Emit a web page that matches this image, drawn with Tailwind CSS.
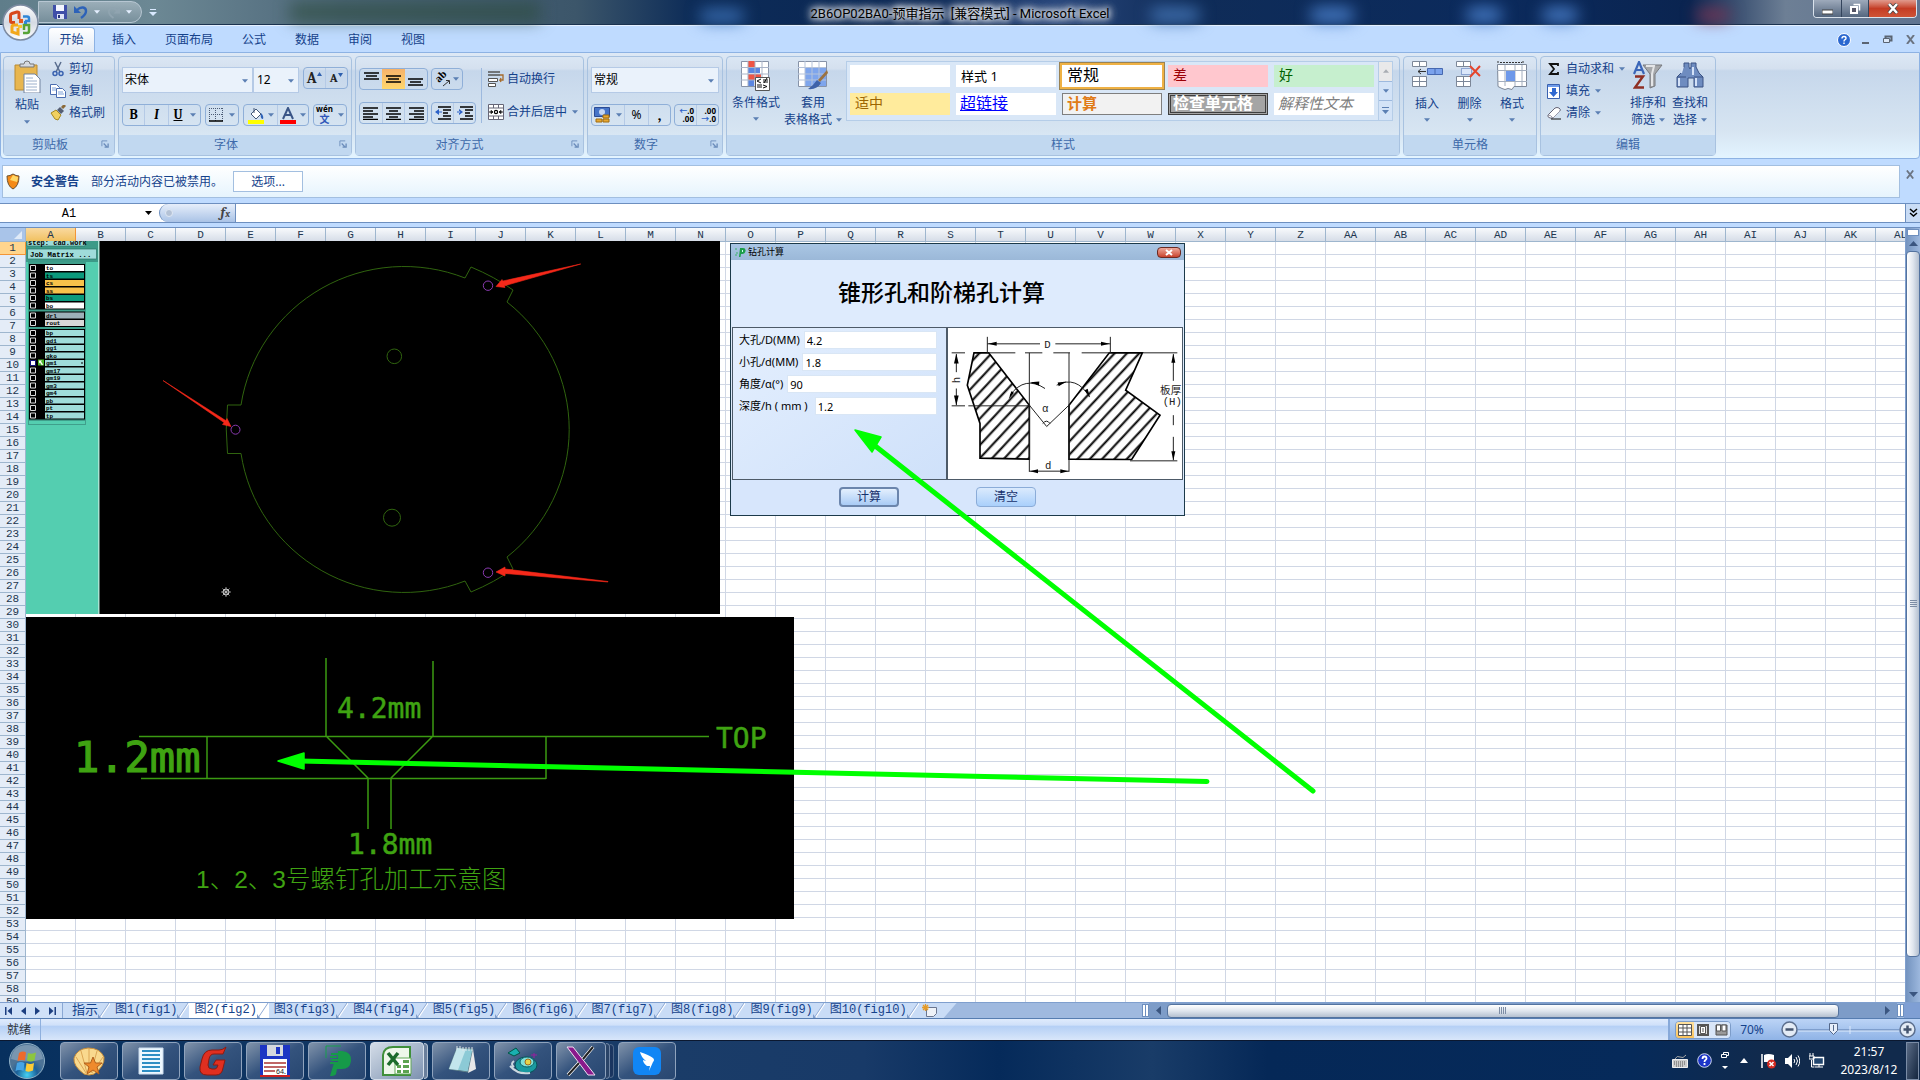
<!DOCTYPE html>
<html lang="zh-CN">
<head>
    <meta charset="utf-8">
    <title>2B6OP02BA0-预审指示 [兼容模式] - Microsoft Excel</title>
    <script src="https://cdn.jsdelivr.net/npm/@tailwindcss/browser@4"></script>
    <style>
        body {
            font-family: 'Noto Sans', 'Noto Sans CJK SC', sans-serif
        }

        .mono {
            font-family: 'Liberation Mono', 'Noto Sans CJK SC', monospace
        }

        .glow {
            font-family: Roboto, 'Noto Sans CJK SC', sans-serif;
            text-shadow: 0 0 5px #fff, 0 0 8px #fff, 0 0 10px #fff, 0 0 14px #fff
        }
    </style>
</head>
<body class="h-screen overflow-hidden flex flex-col bg-[#bfdbff] text-[12px] leading-[16px] text-[#15428b]">
<svg class="hidden">
    <symbol id="dn" viewBox="0 0 7 4"><path d="M0 0h7L3.500 4z" fill="#5b7fb3"/></symbol>
    <symbol id="launch" viewBox="0 0 9 9"><path d="M1 7V1h6" fill="none" stroke="#6b8cba"/><path d="M3 4l4 4M8 4v4H4" fill="none" stroke="#6b8cba" stroke-width="1.500"/></symbol>
</svg>

<!-- title bar -->
<header class="relative shrink-0 h-[25px] flex items-center bg-[linear-gradient(90deg,#5f7d8a_0%,#6c8894_8%,#4c6679_18%,#3c566a_30%,#0d2c58_36%,#0a2653_48%,#27457a_55%,#0f2c58_62%,#0b2a5c_78%,#0a2450_88%,#6d7f95_93%,#5f7390_100%)] border-b border-[#1b3350]">
    <div class="absolute left-[290px] top-[2px] w-[250px] h-[20px] bg-[#2c4b3a]/60 blur-sm"></div>
    <div class="absolute left-[700px] top-[10px] w-[44px] h-[12px] rounded-full bg-[#3e74bb] blur-sm"></div>
    <div class="absolute left-[1150px] top-[8px] w-[50px] h-[14px] rounded-full bg-[#4374b4] blur-sm"></div>
    <div class="absolute left-[1310px] top-[8px] w-[44px] h-[14px] rounded-full bg-[#4a80cc] blur-sm"></div>
    <div class="absolute left-[1466px] top-[8px] w-[36px] h-[14px] rounded-full bg-[#4a80cc] blur-sm"></div>
    <div class="absolute left-[1542px] top-[8px] w-[36px] h-[14px] rounded-full bg-[#4a80cc] blur-sm"></div>
    <div class="absolute left-[1696px] top-[10px] w-[34px] h-[10px] rounded-full bg-[#8a3350] blur-sm"></div>
    <div class="relative ml-[38px] w-[104px] h-[22px] pl-[14px] flex items-center gap-[7px] rounded-r-full border border-[#b7c6d2] bg-linear-to-b from-[#a7b8c2]/80 to-[#7b929e]/80">
        <button aria-label="保存">
            <svg class="w-[14px] h-[14px]" viewBox="0 0 14 14"><path d="M0 0h14v14H2l-2-2z" fill="#3f4fa8"/><path d="M3 0h8v6H3z" fill="#f4f6ff"/><path d="M4 9h7v5H4z" fill="#dfe4f8"/><path d="M5 10h2v3H5z" fill="#26347c"/></svg>
        </button>
        <button aria-label="撤消" class="flex items-center gap-[6px]">
            <svg class="w-[14px] h-[14px]" viewBox="0 0 14 14"><path d="M3 5c4-4 9-3 9 1 0 3-2 5-5 7" fill="none" stroke="#2d62b8" stroke-width="2.400"/><path d="M0 1v7h7z" fill="#2d62b8"/></svg>
            <svg class="w-[6px] h-[4px]" viewBox="0 0 7 4"><path d="M0 0h7L3.500 4z" fill="#e4efff"/></svg>
        </button>
        <button aria-label="恢复" class="flex items-center gap-[6px]">
            <svg class="w-[13px] h-[13px]" viewBox="0 0 14 14"><path d="M11 5C7 1 2 2 2 6c0 3 2 5 5 7" fill="none" stroke="#90a4b0" stroke-width="2"/><path d="M14 1v7H7z" fill="#90a4b0"/></svg>
            <svg class="w-[6px] h-[4px]" viewBox="0 0 7 4"><path d="M0 0h7L3.500 4z" fill="#e4efff"/></svg>
        </button>
    </div>
    <button aria-label="自定义快速访问工具栏" class="relative ml-[7px]">
        <svg class="w-[8px] h-[7px]" viewBox="0 0 8 7"><path d="M1 0h6v1H1zM0 3h8L4 7z" fill="#d9e9ff"/></svg>
    </button>
    <h1 class="absolute left-1/2 top-[6px] -translate-x-1/2 glow text-[13px] text-black whitespace-pre">2B6OP02BA0-预审指示  [兼容模式] - Microsoft Excel</h1>
    <div class="absolute right-[3px] top-0 h-[18px] flex rounded-b border border-t-0 border-[#d9e2ec] overflow-hidden">
        <button aria-label="最小化" class="w-[28px] flex items-center justify-center bg-linear-to-b from-[#9eaabb] to-[#55677f] border-r border-[#33445c]">
            <svg class="w-[11px] h-[12px]" viewBox="0 0 11 12"><path d="M0 7h11v4H0z" fill="#fff" stroke="#444"/></svg>
        </button>
        <button aria-label="还原" class="w-[27px] flex items-center justify-center bg-linear-to-b from-[#9eaabb] to-[#55677f] border-r border-[#33445c]">
            <svg class="w-[12px] h-[12px]" viewBox="0 0 12 12"><path d="M4.500 1.500h6v6" fill="none" stroke="#fff" stroke-width="1.500"/><path d="M2 4h6v6H2z" fill="#556" stroke="#fff" stroke-width="2"/></svg>
        </button>
        <button aria-label="关闭" class="w-[47px] flex items-center justify-center bg-linear-to-b from-[#e09a8d] via-[#c43c24] to-[#cf5336]">
            <svg class="w-[12px] h-[11px]" viewBox="0 0 12 11"><path d="M2 1l8 9M10 1L2 10" stroke="#444" stroke-width="4"/><path d="M2 1l8 9M10 1L2 10" stroke="#fff" stroke-width="2.500"/></svg>
        </button>
    </div>
    <button aria-label="Office" class="absolute z-10 left-[2px] top-[4px]">
        <svg class="w-[37px] h-[37px]" viewBox="0 0 37 37">
            <defs><linearGradient id="orb" x2="0" y2="1"><stop stop-color="#fff"/><stop offset=".5" stop-color="#d5dae3"/><stop offset="1" stop-color="#fff"/></linearGradient></defs>
            <circle cx="18.500" cy="18.500" r="17.500" fill="url(#orb)" stroke="#7d8ba2" stroke-width="1.500"/>
            <g fill="none" stroke-width="3">
                <path d="M17 15V9.500q0-2-2-1.500l-5 1.500q-1.500.5-1.500 2V17q0 1.500 1.500 1.500h3" stroke="#d8481c"/>
                <path d="M21 12.500h4q2 0 2 2V17h-4" stroke="#2e86d8" stroke-width="2.500"/>
                <path d="M16 21h-4q-2 0-2 2v5l6 2V24" stroke="#f3a81c"/>
                <path d="M21 29h4q2 0 2-2v-6h-5v5" stroke="#57a336" stroke-width="2.500"/>
            </g>
            <path d="M17 15h4v4h-4z" fill="#e85b1e"/><path d="M22 17h3v3h-3z" fill="#2e86d8"/><path d="M16 21h4v3h-4z" fill="#f7c631"/>
        </svg>
    </button>
</header>

<!-- ribbon tabs -->
<nav class="shrink-0 h-[27px] pl-[48px] pr-[4px] flex items-end border-t border-[#e4f0ff]">
    <button class="w-[47px] h-[25px] rounded-t border border-b-0 border-[#8db2e3] bg-linear-to-b from-white to-[#e1eaf6]">开始</button>
    <button class="w-[58px] h-[25px]">插入</button>
    <button class="w-[72px] h-[25px]">页面布局</button>
    <button class="w-[58px] h-[25px]">公式</button>
    <button class="w-[48px] h-[25px]">数据</button>
    <button class="w-[58px] h-[25px]">审阅</button>
    <button class="w-[48px] h-[25px]">视图</button>
    <div class="ml-auto h-[25px] flex items-center gap-[11px]">
        <button aria-label="帮助"><svg class="w-[14px] h-[14px]" viewBox="0 0 14 14"><circle cx="7" cy="7" r="6.500" fill="#2a67d0" stroke="#fff"/><path d="M5 5.500q0-2 2-2t2 1.700q0 1-1 1.500T7 8.500M7 9.500v1.500" fill="none" stroke="#fff" stroke-width="1.400"/></svg></button>
        <button aria-label="最小化窗口"><svg class="w-[8px] h-[10px]" viewBox="0 0 8 10"><path d="M0 7h7v2H0z" fill="#5a6472"/></svg></button>
        <button aria-label="还原窗口" class="ml-[2px]"><svg class="w-[10px] h-[9px]" viewBox="0 0 10 9"><path d="M2.500 4V1.500h6v4H7" fill="none" stroke="#5a6472" stroke-width="2"/><path d="M.5 3.500h6v4h-6z" fill="#dce8f8" stroke="#5a6472"/></svg></button>
        <button aria-label="关闭窗口" class="ml-[2px]"><svg class="w-[10px] h-[9px]" viewBox="0 0 10 9"><path d="M1 0l7 9M8 0L1 9" stroke="#6b7482" stroke-width="2"/></svg></button>
    </div>
</nav>

<!-- ribbon -->
<section class="shrink-0 h-[107px] pl-[2px] pt-[3px] pb-[2px] flex gap-[3px] border border-[#8db2e3] rounded-b bg-[linear-gradient(#dde8f5_0%,#d4e0ef_15%,#c6d7eb_17%,#d7e5f2_75%,#e3f4ff_100%)] whitespace-nowrap">
    <div class="w-[112px] flex flex-col border border-[#a8c2e0] rounded">
        <div class="flex-1 flex pt-[3px]">
            <button class="ml-[8px] w-[30px] flex flex-col items-center">
                <svg class="w-[28px] h-[33px] shrink-0" viewBox="0 0 28 33"><path d="M2 5h22v25H2z" fill="#e8b64f" stroke="#b98a33"/><path d="M7 7V4h4q0-3 3-3t3 3h4v3z" fill="#d5d9df" stroke="#777"/><path d="M11 14h11l5 5v14H11z" fill="#fff" stroke="#7384a0"/><path d="M13 18h7M13 21h11M13 24h11M13 27h11M13 30h11" stroke="#9cb0cc"/></svg>
                <span class="mt-[4px]">粘贴</span>
                <svg class="mt-[7px] w-[6px] h-[4px] shrink-0"><use href="#dn"/></svg>
            </button>
            <div class="ml-[8px] flex flex-col">
                <button class="h-[22px] flex items-center gap-[3px] -mt-[2px]"><svg class="w-[16px] h-[16px]" viewBox="0 0 16 16"><path d="M5 1l5 10M11 1L6 11" stroke="#5a6e8e" stroke-width="1.500"/><circle cx="5" cy="12.500" r="2" fill="none" stroke="#3a62b0" stroke-width="1.500"/><circle cx="11" cy="12.500" r="2" fill="none" stroke="#3a62b0" stroke-width="1.500"/></svg>剪切</button>
                <button class="h-[22px] flex items-center gap-[3px]"><svg class="w-[16px] h-[14px]" viewBox="0 0 16 14"><path d="M.5.5h6l3 3v7h-9z" fill="#fff" stroke="#4b6db0"/><path d="M6.500 4.500h6l3 3v6h-9z" fill="#fff" stroke="#4b6db0"/><path d="M2 4h4M2 6h4M8 8h5M8 10h6" stroke="#7da0d8"/></svg>复制</button>
                <button class="h-[22px] flex items-center gap-[3px]"><svg class="w-[16px] h-[16px]" viewBox="0 0 16 16"><path d="M1 8l5-3 5 5-3 5-3-1z" fill="#f0d060" stroke="#a68820"/><path d="M7 5l3-3 4 4-3 3z" fill="#555f74"/><path d="M12 3l3-3" stroke="#8b6a3a" stroke-width="3"/></svg>格式刷</button>
            </div>
        </div>
        <div class="relative h-[20px] bg-[#c1d8f0] text-[#3e6aaa] text-center pr-[18px] pt-[2px]">剪贴板<button aria-label="剪贴板选项" class="absolute right-[5px] top-[5px]"><svg class="w-[8px] h-[8px]"><use href="#launch"/></svg></button></div>
    </div>

    <div class="w-[234px] flex flex-col border border-[#a8c2e0] rounded">
        <div class="flex-1 px-[3px] pt-[10px] flex flex-col">
            <div class="flex items-start">
                <div class="relative"><select aria-label="字体" class="appearance-none w-[131px] h-[26px] pl-[2px] border border-[#b5cae6] bg-[#eaf2fb] text-black"><option>宋体</option></select><svg class="absolute right-[5px] top-[12px] w-[6px] h-[4px] pointer-events-none"><use href="#dn"/></svg></div>
                <div class="relative"><select aria-label="字号" class="appearance-none w-[46px] h-[26px] pl-[3px] border border-[#b5cae6] bg-[#eaf2fb] text-black"><option>12</option></select><svg class="absolute right-[5px] top-[12px] w-[6px] h-[4px] pointer-events-none"><use href="#dn"/></svg></div>
                <div class="ml-[4px] h-[22px] w-[45px] flex rounded-sm border border-[#8fafd8] font-serif font-bold text-[#222]">
                    <button class="w-1/2 border-r border-[#b5cae6] text-[15px]" aria-label="增大字号">A<svg class="inline w-[5px] h-[4px] -mt-[10px]" viewBox="0 0 5 4"><path d="M0 4h5L2.500 0z" fill="#2d5fae"/></svg></button>
                    <button class="w-1/2 text-[12px]" aria-label="减小字号">A<svg class="inline w-[5px] h-[4px] -mt-[8px]" viewBox="0 0 5 4"><path d="M0 0h5L2.500 4z" fill="#2d5fae"/></svg></button>
                </div>
            </div>
            <div class="mt-[11px] flex gap-[4px] text-black">
                <div class="h-[22px] w-[79px] flex rounded-sm border border-[#8fafd8] font-serif text-[13px]">
                    <button class="w-[22px] border-r border-[#b5cae6] font-bold">B</button>
                    <button class="w-[24px] border-r border-[#b5cae6] font-bold italic">I</button>
                    <button class="flex-1 flex items-center justify-center gap-[7px]"><span class="font-bold underline">U</span><svg class="w-[6px] h-[4px]"><use href="#dn"/></svg></button>
                </div>
                <button aria-label="边框" class="h-[22px] w-[34px] flex items-center justify-center gap-[6px] rounded-sm border border-[#8fafd8]"><svg class="w-[14px] h-[14px]" viewBox="0 0 14 14"><path d="M.5 0v13M6.500 0v13M13.500 0v13M0 .5h14M0 6.500h14" stroke="#4a5a74" stroke-dasharray="1 1"/><path d="M0 13h14" stroke="#000" stroke-width="1.500"/></svg><svg class="w-[6px] h-[4px]"><use href="#dn"/></svg></button>
                <div class="h-[22px] w-[66px] flex rounded-sm border border-[#8fafd8]">
                    <button aria-label="填充颜色" class="w-[34px] flex items-center justify-center gap-[4px] border-r border-[#b5cae6]"><svg class="w-[16px] h-[17px]" viewBox="0 0 16 17"><path d="M3 7l5-5 5 5-5 5z" fill="#fff" stroke="#445878"/><path d="M6 1v5" stroke="#445878"/><path d="M13 6q3 3 2 6-3 0-2-6" fill="#2d62b8"/><path d="M0 13h16v4H0z" fill="#ff0"/></svg><svg class="w-[6px] h-[4px]"><use href="#dn"/></svg></button>
                    <button aria-label="字体颜色" class="flex-1 flex items-center justify-center gap-[4px]"><svg class="w-[16px] h-[17px]" viewBox="0 0 16 17"><path d="M3 12L8 1l5 11M5 8h6" fill="none" stroke="#3a5587" stroke-width="2"/><path d="M0 13h16v4H0z" fill="red"/></svg><svg class="w-[6px] h-[4px]"><use href="#dn"/></svg></button>
                </div>
                <button aria-label="拼音指南" class="h-[22px] w-[34px] flex items-center justify-center gap-[5px] rounded-sm border border-[#8fafd8]"><span class="flex flex-col text-[8px] leading-[8px] font-bold"><span>wén</span><span class="text-[10px] leading-[12px] text-[#2f55b8]">文</span></span><svg class="w-[6px] h-[4px]"><use href="#dn"/></svg></button>
            </div>
        </div>
        <div class="relative h-[20px] bg-[#c1d8f0] text-[#3e6aaa] text-center pr-[18px] pt-[2px]">字体<button aria-label="字体选项" class="absolute right-[4px] top-[5px]"><svg class="w-[8px] h-[8px]"><use href="#launch"/></svg></button></div>
    </div>

    <div class="w-[229px] flex flex-col border border-[#a8c2e0] rounded">
        <div class="flex-1 px-[3px] pt-[11px] flex">
            <div class="flex flex-col gap-[12px]">
                <div class="flex gap-[3px]">
                    <div class="h-[22px] w-[69px] flex rounded-sm border border-[#8fafd8]">
                        <button aria-label="顶端对齐" class="flex-1 flex justify-center pt-[3px]"><svg class="w-[15px] h-[9px]" viewBox="0 0 15 9"><path d="M0 1h15M2 4h11M0 7h15" stroke="#000" stroke-width="1.500"/></svg></button>
                        <button aria-label="垂直居中" class="flex-1 flex justify-center items-center bg-linear-to-b from-[#f6b26a] to-[#ffd76c]"><svg class="w-[15px] h-[9px]" viewBox="0 0 15 9"><path d="M0 1h15M2 4h11M0 7h15" stroke="#000" stroke-width="1.500"/></svg></button>
                        <button aria-label="底端对齐" class="flex-1 flex justify-center items-end pb-[2px]"><svg class="w-[15px] h-[9px]" viewBox="0 0 15 9"><path d="M0 1h15M2 4h11M0 7h15" stroke="#000" stroke-width="1.500"/></svg></button>
                    </div>
                    <button aria-label="方向" class="h-[22px] w-[32px] flex items-center justify-center gap-[2px] rounded-sm border border-[#8fafd8] text-black"><svg class="w-[16px] h-[16px]" viewBox="0 0 16 16"><text transform="translate(4 12) rotate(-45)" font-family="Liberation Serif" font-weight="bold" font-size="11">ab</text><path d="M8 15l6-5M11 9.500h3.500V13" fill="none" stroke="#333"/></svg><svg class="w-[6px] h-[4px]"><use href="#dn"/></svg></button>
                </div>
                <div class="flex gap-[3px]">
                    <div class="h-[22px] w-[69px] flex rounded-sm border border-[#8fafd8]">
                        <button aria-label="左对齐" class="flex-1 flex justify-center items-center border-r border-[#b5cae6]"><svg class="w-[15px] h-[13px]" viewBox="0 0 15 13"><path d="M0 1h15M0 4h10M0 7h15M0 10h10M0 12.500h15" stroke="#000" stroke-width="1.300"/></svg></button>
                        <button aria-label="居中" class="flex-1 flex justify-center items-center border-r border-[#b5cae6]"><svg class="w-[15px] h-[13px]" viewBox="0 0 15 13"><path d="M0 1h15M3 4h9M0 7h15M3 10h9M0 12.500h15" stroke="#000" stroke-width="1.300"/></svg></button>
                        <button aria-label="右对齐" class="flex-1 flex justify-center items-center"><svg class="w-[15px] h-[13px]" viewBox="0 0 15 13"><path d="M0 1h15M5 4h10M0 7h15M5 10h10M0 12.500h15" stroke="#000" stroke-width="1.300"/></svg></button>
                    </div>
                    <div class="h-[22px] w-[45px] flex rounded-sm border border-[#8fafd8]">
                        <button aria-label="减少缩进" class="flex-1 flex justify-center items-center border-r border-[#b5cae6]"><svg class="w-[16px] h-[14px]" viewBox="0 0 16 14"><path d="M3 1h13M8 4h8M8 7h5M8 10h8M3 13h13" stroke="#000" stroke-width="1.300"/><path d="M0 6l4-3v6zM4 5.500h3v1H4z" fill="#2d62c8"/></svg></button>
                        <button aria-label="增加缩进" class="flex-1 flex justify-center items-center"><svg class="w-[16px] h-[14px]" viewBox="0 0 16 14"><path d="M3 1h13M8 4h8M8 7h5M8 10h8M3 13h13" stroke="#000" stroke-width="1.300"/><path d="M6 6L2 3v6zM0 5.500h3v1H0z" fill="#2d62c8"/></svg></button>
                    </div>
                </div>
            </div>
            <div class="ml-[5px] h-[55px] border-l border-[#9db9de]"></div>
            <div class="ml-[6px] flex flex-col gap-[17px] pt-[3px]">
                <button class="flex items-center gap-[3px]"><svg class="w-[16px] h-[16px]" viewBox="0 0 16 16"><path d="M0 1h12M0 4h12" stroke="#555" stroke-width="1.500"/><path d="M.5 7.500h9v3h-9zM.5 12.500h7v3h-7z" fill="#fff" stroke="#555"/><path d="M12 4h3v5h-3l1-2M12 9l1 2" fill="none" stroke="#a66a2a" stroke-width="1.300"/></svg>自动换行</button>
                <button class="flex items-center gap-[3px]"><svg class="w-[16px] h-[16px]" viewBox="0 0 16 16"><path d="M.5.5h15v15H.5z" fill="#fff" stroke="#667"/><path d="M.5 4h15M.5 12h15M5.500 0v4M10.500 0v4M5.500 12v4M10.500 12v4" stroke="#667"/><path d="M1 8h4M11 8h4M5 8L3 6.500v3zM11 8l2-1.500v3z" stroke="#222"/><circle cx="8" cy="8" r="1.600" fill="none" stroke="#000" stroke-width="1.200"/></svg>合并后居中<svg class="ml-[2px] w-[6px] h-[4px]"><use href="#dn"/></svg></button>
            </div>
        </div>
        <div class="relative h-[20px] bg-[#c1d8f0] text-[#3e6aaa] text-center pr-[20px] pt-[2px]">对齐方式<button aria-label="对齐选项" class="absolute right-[4px] top-[5px]"><svg class="w-[8px] h-[8px]"><use href="#launch"/></svg></button></div>
    </div>

    <div class="w-[136px] flex flex-col border border-[#a8c2e0] rounded">
        <div class="flex-1 px-[3px] pt-[10px]">
            <div class="relative"><select aria-label="数字格式" class="appearance-none w-full h-[26px] pl-[2px] border border-[#b5cae6] bg-[#eaf2fb] text-black"><option>常规</option></select><svg class="absolute right-[5px] top-[12px] w-[6px] h-[4px] pointer-events-none"><use href="#dn"/></svg></div>
            <div class="mt-[11px] flex gap-[3px] text-black">
                <div class="h-[22px] flex-1 flex rounded-sm border border-[#8fafd8]">
                    <button aria-label="会计数字格式" class="w-[33px] flex items-center justify-center gap-[5px] border-r border-[#b5cae6]"><svg class="w-[17px] h-[16px]" viewBox="0 0 17 16"><path d="M.5.5h15v9H.5z" fill="#4674c8" stroke="#2b4b94"/><circle cx="8" cy="5" r="3" fill="#c3d6f4"/><path d="M9 8h6v3H9zM9 12h6v3H9zM2 12h6v3H2z" fill="#e7a832" stroke="#a06d10"/></svg><svg class="w-[6px] h-[4px]"><use href="#dn"/></svg></button>
                    <button class="w-[24px] border-r border-[#b5cae6]">%</button>
                    <button class="flex-1 font-serif font-bold text-[16px] leading-[10px]">,</button>
                </div>
                <div class="h-[22px] w-[45px] flex rounded-sm border border-[#8fafd8] text-[8px] leading-[8px] font-bold">
                    <button aria-label="增加小数位数" class="flex-1 text-right pr-[2px] border-r border-[#b5cae6]"><span class="text-[#2d62c8]">←</span>.0<br>.00</button>
                    <button aria-label="减少小数位数" class="flex-1 text-right pr-[2px]">.00<br><span class="text-[#2d62c8]">→</span>.0</button>
                </div>
            </div>
        </div>
        <div class="relative h-[20px] bg-[#c1d8f0] text-[#3e6aaa] text-center pr-[18px] pt-[2px]">数字<button aria-label="数字选项" class="absolute right-[4px] top-[5px]"><svg class="w-[8px] h-[8px]"><use href="#launch"/></svg></button></div>
    </div>

    <div class="w-[674px] flex flex-col border border-[#a8c2e0] rounded">
        <div class="flex-1 flex pt-[4px]">
            <button class="ml-[4px] w-[50px] flex flex-col items-center">
                <svg class="w-[30px] h-[30px] shrink-0" viewBox="0 0 30 30"><path d="M.5.5h27v25H.5z" fill="#fff" stroke="#8793a8"/><path d="M7 0h7v6H7zM7 13h13v6H7z" fill="#ee5544"/><path d="M7 7h12v5H7zM7 19h6v6H7z" fill="#5b86e0"/><path d="M7 0v25M14 0v25M21 0v25M0 6.500h28M0 13h28M0 19h28" stroke="#a9b4c8"/><path d="M14.500 16.500h14v13h-14z" fill="#fff" stroke="#555"/><path d="M20 18l-4 2 4 2M16 24h5M16 26h5M22 21h5M22 19h5M26 17l-3 5M22 24l4 1.500-4 1.500" fill="none" stroke="#111"/></svg>
                <span class="mt-[4px]">条件格式</span>
                <svg class="mt-[6px] w-[6px] h-[4px]"><use href="#dn"/></svg>
            </button>
            <button class="ml-[2px] w-[60px] flex flex-col items-center">
                <svg class="w-[30px] h-[30px] shrink-0" viewBox="0 0 30 30"><path d="M.5.5h28v25H.5z" fill="#fff" stroke="#8793a8"/><path d="M7 6h21v19H7z" fill="#7ea5ec"/><path d="M7 0v25M14 0v25M21 0v25M0 6.500h28M0 13h28M0 19h28" stroke="#b5c3da"/><path d="M29 9L20 19l2 2 8-9z" fill="#9b7240"/><path d="M19 19l4 3q-4 7-13 6 5-3 9-9z" fill="#3f62a8"/></svg>
                <span class="mt-[4px]">套用</span>
                <span class="flex items-center gap-[4px] leading-[17px]">表格格式<svg class="w-[6px] h-[4px]"><use href="#dn"/></svg></span>
            </button>
            <div class="ml-[3px] h-[60px] flex border border-[#b5cde8] bg-[#d9e7f7]">
                <div class="grid grid-cols-[repeat(5,100px)] grid-rows-[22px_22px] gap-[6px] pl-[3px] pr-[4px] pt-[3px] text-[16px] leading-[18px] text-black">
                    <button aria-label="空白样式" class="bg-white"></button>
                    <button class="bg-white pl-[5px] text-left text-[13px]">样式 1</button>
                    <button class="bg-white pl-[5px] pb-[2px] text-left outline-2 outline-[#efb144] ring-3 ring-[#9a8252]">常规</button>
                    <button class="bg-[#ffc7ce] text-[#9c0006] pl-[5px] pb-[2px] text-left text-[14px]">差</button>
                    <button class="bg-[#c6efce] text-[#006100] pl-[5px] pb-[2px] text-left text-[14px]">好</button>
                    <button class="bg-[#ffeb9c] text-[#9c6500] pl-[5px] pb-[2px] text-left text-[14px]">适中</button>
                    <button class="bg-white text-[#0000ff] pl-[4px] pb-[2px] text-left underline">超链接</button>
                    <button class="bg-[#f2f2f2] text-[#e07b17] pl-[4px] pb-[2px] text-left font-bold border border-[#7f7f7f] text-[15px]">计算</button>
                    <button class="bg-[#a5a5a5] text-white pl-[2px] pb-[2px] text-left font-bold border-3 border-double border-[#3f3f3f] leading-[14px]">检查单元格</button>
                    <button class="bg-white text-[#7f7f7f] pl-[4px] pb-[2px] text-left italic text-[15px]">解释性文本</button>
                </div>
                <div class="w-[14px] flex flex-col border-l border-[#b5cde8]">
                    <button aria-label="上一行" class="flex-1 flex items-center justify-center bg-[#e9e9ea]"><svg class="w-[6px] h-[4px]" viewBox="0 0 7 4"><path d="M0 4h7L3.500 0z" fill="#a9adb3"/></svg></button>
                    <button aria-label="下一行" class="flex-1 flex items-center justify-center border-y border-[#9db9de] bg-[#d3e3f7]"><svg class="w-[6px] h-[4px]"><use href="#dn"/></svg></button>
                    <button aria-label="其他" class="flex-1 flex items-center justify-center bg-[#d3e3f7]"><svg class="w-[7px] h-[7px]" viewBox="0 0 7 7"><path d="M0 0h7v1H0zM0 3h7L3.500 7z" fill="#5b7fb3"/></svg></button>
                </div>
            </div>
        </div>
        <div class="h-[20px] bg-[#c1d8f0] text-[#3e6aaa] text-center pt-[2px]">样式</div>
    </div>

    <div class="w-[134px] flex flex-col border border-[#a8c2e0] rounded">
        <div class="flex-1 flex pt-[4px] pl-[2px]">
            <button class="w-[42px] flex flex-col items-center">
                <svg class="w-[31px] h-[30px] shrink-0" viewBox="0 0 31 30"><path d="M.5.5h14v5H.5zM.5 15.500h14v10H.5z" fill="#fff" stroke="#7c8798"/><path d="M7.500 0v6M7.500 15v11M0 20.500h15" stroke="#7c8798"/><path d="M15.500 7.500h15v6h-15z" fill="#7ba2ec" stroke="#4668b0"/><path d="M23 7v7" stroke="#4668b0"/><path d="M6 10.500h8M9 8l-3 2.500L9 13" fill="none" stroke="#333"/></svg>
                <span class="mt-[5px]">插入</span><svg class="mt-[6px] w-[6px] h-[4px]"><use href="#dn"/></svg>
            </button>
            <button class="w-[43px] flex flex-col items-center">
                <svg class="w-[27px] h-[30px] shrink-0" viewBox="0 0 27 30"><path d="M.5.5h14v5H.5zM.5 15.500h14v10H.5z" fill="#fff" stroke="#7c8798"/><path d="M7.500 0v6M7.500 15v11M0 20.500h15" stroke="#7c8798"/><path d="M5.500 7.500h10v6h-10z" fill="#dbe7fa" stroke="#4668b0" stroke-dasharray="1 1"/><path d="M14 5l10 10M24 5L14 16" stroke="#e5452c" stroke-width="2"/></svg>
                <span class="mt-[5px]">删除</span><svg class="mt-[6px] w-[6px] h-[4px]"><use href="#dn"/></svg>
            </button>
            <button class="w-[42px] flex flex-col items-center">
                <svg class="w-[30px] h-[30px] shrink-0" viewBox="0 0 30 30"><path d="M.5 3.500h29v22H17l-2 3-4-1-3 1-3-1-4-2z" fill="#fff" stroke="#7c8798"/><path d="M8 4v21M18 4v21M25 4v21M0 9.500h30M0 20.500h30" stroke="#a3aebe"/><path d="M9 10h9v10H9z" fill="#6d98ea"/><path d="M1 0v3M26 0v3M3 1.500h22" stroke="#333" stroke-dasharray="2 1"/></svg>
                <span class="mt-[5px]">格式</span><svg class="mt-[6px] w-[6px] h-[4px]"><use href="#dn"/></svg>
            </button>
        </div>
        <div class="h-[20px] bg-[#c1d8f0] text-[#3e6aaa] text-center pt-[2px]">单元格</div>
    </div>

    <div class="w-[176px] flex flex-col border border-[#a8c2e0] rounded">
        <div class="flex-1 flex pt-px pl-[6px]">
            <div class="flex flex-col w-[80px]">
                <button class="h-[22px] flex items-center gap-[5px]"><svg class="w-[14px] h-[12px]" viewBox="0 0 14 12"><path d="M11 3V1H3l4 5-4 5h8V9" fill="none" stroke="#111" stroke-width="1.800"/></svg>自动求和<svg class="w-[6px] h-[4px]"><use href="#dn"/></svg></button>
                <button class="h-[22px] flex items-center gap-[5px]"><svg class="w-[14px] h-[15px]" viewBox="0 0 14 15"><path d="M.5.5h12v14H.5z" fill="#fff" stroke="#3a62b0"/><path d="M1 1h11v2H1z" fill="#6f9cea"/><path d="M5 4h4v4h2l-4.500 5L2 8h3z" fill="#2f68d0"/></svg>填充<svg class="w-[6px] h-[4px]"><use href="#dn"/></svg></button>
                <button class="h-[22px] flex items-center gap-[5px]"><svg class="w-[14px] h-[14px]" viewBox="0 0 14 14"><path d="M1 9l7-7q2-1 4 0t1 3l-7 7H3Q0 11 1 9z" fill="#fff" stroke="#667"/><path d="M1 9q3 0 5 3l7-7" fill="none" stroke="#99a"/><path d="M4 13h10" stroke="#111"/></svg>清除<svg class="w-[6px] h-[4px]"><use href="#dn"/></svg></button>
            </div>
            <button class="mt-[3px] w-[42px] flex flex-col items-center">
                <svg class="w-[30px] h-[30px] shrink-0" viewBox="0 0 30 30"><path d="M1 13L6 1l5 12M3 9h6" fill="none" stroke="#3b66b8" stroke-width="2.200"/><path d="M2 15.500h8L2 26.500h9" fill="none" stroke="#8e2f24" stroke-width="2.400"/><path d="M10 4h19l-7 9v12l-5 2V13z" fill="#a5a7aa" stroke="#77797d"/><path d="M13 5h8l-2 8v12" fill="none" stroke="#e4e5e7" stroke-width="2"/></svg>
                <span class="mt-[4px]">排序和</span>
                <span class="flex items-center gap-[4px] leading-[17px]">筛选<svg class="w-[6px] h-[4px]"><use href="#dn"/></svg></span>
            </button>
            <button class="mt-[3px] w-[42px] flex flex-col items-center">
                <svg class="w-[28px] h-[30px] shrink-0" viewBox="0 0 28 30"><path d="M8 2h5v4l1 2 1-2V2h5v4l3 6 4 4v10h-9v-9h-6v9H1V16l4-4 3-6z" fill="#6e8cc0" stroke="#3a5284"/><path d="M3 17v8M7 6l-2 6M20 17v8M17 6v8" stroke="#d4e2f8" stroke-width="2"/><path d="M1 16h9M18 16h9" stroke="#3a5284"/></svg>
                <span class="mt-[4px]">查找和</span>
                <span class="flex items-center gap-[4px] leading-[17px]">选择<svg class="w-[6px] h-[4px]"><use href="#dn"/></svg></span>
            </button>
        </div>
        <div class="h-[20px] bg-[#c1d8f0] text-[#3e6aaa] text-center pt-[2px]">编辑</div>
    </div>
</section>

<!-- security warning -->
<section class="shrink-0 mt-[6px] h-[33px] pl-[2px] flex">
    <div class="flex-1 flex items-center border border-[#a3bfe0] bg-linear-to-b from-white to-[#e6f4fd]">
        <svg class="ml-[3px] w-[14px] h-[17px]" viewBox="0 0 14 17"><path d="M7 1q3 2 6 2 0 10-6 13Q1 13 1 3q3 0 6-2z" fill="#f58a16" stroke="#6b5130"/><path d="M7 2q2.500 1.500 5 2 0 2-1 5L4 7z" fill="#ffd765"/></svg>
        <strong class="ml-[11px]">安全警告</strong>
        <span class="ml-[12px]">部分活动内容已被禁用。</span>
        <button class="ml-[10px] w-[70px] h-[21px] border border-[#a3bfe0] bg-white">选项...</button>
    </div>
    <button aria-label="关闭消息栏" class="w-[20px] pt-[5px] self-start flex justify-center"><svg class="w-[9px] h-[9px]" viewBox="0 0 10 9"><path d="M1 0l7 9M8 0L1 9" stroke="#6b7482" stroke-width="2"/></svg></button>
</section>

<!-- formula bar -->
<section class="shrink-0 mt-[5px] h-[20px] flex border-y border-[#6d8fbf] bg-white text-black">
    <input aria-label="名称框" value="A1" class="mono w-[138px] pt-px text-center text-[12px]">
    <button aria-label="名称列表" class="w-[21px] flex items-center justify-center"><svg class="w-[7px] h-[4px]" viewBox="0 0 7 4"><path d="M0 0h7L3.500 4z" fill="#000"/></svg></button>
    <div class="w-[77px] flex items-center justify-between pl-[5px] pr-[5px] rounded-l-full border-l border-r border-[#6d8fbf] bg-linear-to-b from-[#e6eefa] to-[#aac3e6]">
        <span class="w-[8px] h-[8px] rounded-full bg-[#b4c2d6] border border-[#dfe8f4]"></span>
        <button class="font-serif italic font-bold text-[14px] text-[#444]">f<span class="text-[10px]">x</span></button>
    </div>
    <input aria-label="编辑栏" class="flex-1 px-1 text-[12px]">
    <button aria-label="展开编辑栏" class="w-[15px] flex items-center justify-center border-l border-[#6d8fbf] bg-[#c9dcf5]"><svg class="w-[9px] h-[10px]" viewBox="0 0 9 10"><path d="M1 1l3.500 3L8 1M1 5l3.500 3L8 5" fill="none" stroke="#000" stroke-width="1.500"/></svg></button>
</section>

<!-- worksheet -->
<main class="flex-1 min-h-0 mt-[4px] flex border-t border-[#6d8fbf]">
    <div class="relative flex-1 min-w-0 overflow-hidden bg-white">
        <table id="sheet" class="mono table-fixed border-separate border-spacing-0 w-[1926px] text-[11px] leading-[12px] text-[#22364f]">
            <thead><tr id="cols" class="h-[14px]"></tr></thead>
            <tbody id="rows"></tbody>
        </table>

        <!-- board outline -->
        <svg class="absolute left-[26px] top-[13px] w-[694px] h-[373px]" viewBox="26 241 694 373">
            <path d="M26 240h694v374H26z" fill="#000"/>
            <path d="M26 240h73v374H26z" fill="#54ceb0"/>
            <path d="M98 240h1.500v374H98z" fill="#a8e4d4"/>
            <path d="M26 240h72v22H26z" fill="#3c9a88"/>
            <path d="M27 240h58v6H27zM27.500 249h69v10h-69z" fill="#9fdcda" stroke="#2d7568" stroke-width=".7"/>
            <g class="mono" font-weight="bold" fill="#000"><text x="28" y="245" font-size="7">step: cad.work</text><text x="30" y="256.500" font-size="7.300">Job Matrix ...</text></g>
            <path d="M28 262h58v163H28z" fill="#3f9f8b"/>
            <path d="M29 421h56v3H29z" fill="#54ceb0"/>
            <g id="layers" class="mono" font-weight="bold" font-size="6"></g>
            <g fill="none" stroke="#30640f">
                <path d="M465 278l6-11q24 10 42 23l-6 12A165 163 0 0 1 507 557l6 12q-18 13-42 23l-6-11A165 163 0 0 1 241 453.500h-13.500Q225 429 227.500 405H241A165 163 0 0 1 465 278z"/>
                <circle cx="394.300" cy="356.300" r="7.300"/>
                <circle cx="392" cy="517.700" r="8.500"/>
            </g>
            <g fill="none" stroke="#8a3ab0"><circle cx="488" cy="285.700" r="4.700"/><circle cx="235.500" cy="429.700" r="4.500"/><circle cx="488" cy="572.700" r="4.700"/></g>
            <g fill="#f5291a" stroke="#f5291a" stroke-width=".6">
                <path d="M580.700 264l-78 17-.7-1.500-6 7 9 1-.5-1.700z"/>
                <path d="M163 380.500l61 42-1.500 2 8.500 2-4-8-1.300 2z"/>
                <path d="M608 581.500l-103-12.500v-2l-9 5 9 4v-2.500l103 8.500z"/>
            </g>
            <g stroke="#ccc" fill="none"><circle cx="226" cy="592" r="3"/><path d="M226 587v10M221 592h10M222.500 588.500l7 7M229.500 588.500l-7 7" stroke-width=".7"/></g>
        </svg>

        <!-- countersink section -->
        <svg class="absolute left-[26px] top-[389px] w-[768px] h-[302px]" viewBox="26 617 768 302">
            <path d="M26 616h768v303H26z" fill="#000"/>
            <path d="M326 658v78l42 42v51M433 661v75l-42 42v51M139 736.500h570M141 778.500h405M207 736v42M546 736v43" fill="none" stroke="#3b9a12" stroke-width="1.500"/>
            <g fill="#3fa312" stroke="#3fa312" stroke-width=".5" font-family="DejaVu Sans Mono">
                <text x="337" y="718" font-size="28">4.2mm</text>
                <text x="74" y="772" font-size="42" stroke-width="1.200">1.2mm</text>
                <text x="716" y="748" font-size="28">TOP</text>
                <text x="348" y="854" font-size="28">1.8mm</text>
            </g>
            <text x="196" y="888" font-size="24.500" fill="#3fa312" style="font-family:'Liberation Sans','Noto Sans CJK SC',sans-serif" font-weight="300">1、2、3号螺钉孔加工示意图</text>
        </svg>

        <!-- drill calculator -->
        <section class="absolute left-[730px] top-[15px] w-[455px] h-[273px] flex flex-col border border-[#1c3a4a] bg-[#deebfd] text-black text-[11px]">
            <div class="h-[16px] shrink-0 pl-[4px] pr-[3px] flex items-center bg-linear-to-b from-[#a9c6e4] to-[#9bb8d8]">
                <svg class="w-[11px] h-[10px]" viewBox="0 0 11 10"><path d="M4 10l1-9h3q3 0 2.500 3T7 7H6l-.5 3z" fill="#1e9e4a"/><path d="M7 3h1v2H7z" fill="#cfe"/><path d="M1 1v2M2 5v2M0 8h2" stroke="#3db56a"/></svg>
                <h2 class="ml-[2px] text-[9px]">钻孔计算</h2>
                <button aria-label="关闭对话框" class="ml-auto w-[24px] h-[11px] flex items-center justify-center rounded-sm border border-[#6b2a22] bg-linear-to-b from-[#eda89b] to-[#c8412c]"><svg class="w-[8px] h-[7px]" viewBox="0 0 8 7"><path d="M1 1l6 5M7 1L1 6" stroke="#fff" stroke-width="2"/></svg></button>
            </div>
            <h3 class="flex-1 flex items-center justify-center pr-[32px] pb-[4px] text-[23px] font-medium">锥形孔和阶梯孔计算</h3>
            <div class="mx-px h-[153px] shrink-0 flex border border-[#4d5a68]">
                <div class="w-[213px] pl-[6px] pr-[9px] pt-[3px] flex flex-col gap-[4px] bg-linear-to-br from-[#e4effe] to-[#cfe1fa]">
                    <label class="h-[18px] flex items-center gap-[4px] whitespace-nowrap">大孔/D(MM)<input value="4.2" class="flex-1 min-w-0 h-[18px] pl-[2px] bg-white border border-[#d9e6f5]"></label>
                    <label class="h-[18px] flex items-center gap-[4px] whitespace-nowrap">小孔/d(MM)<input value="1.8" class="flex-1 min-w-0 h-[18px] pl-[2px] bg-white border border-[#d9e6f5]"></label>
                    <label class="h-[18px] flex items-center gap-[4px] whitespace-nowrap">角度/α(°)<input value="90" class="flex-1 min-w-0 h-[18px] pl-[2px] bg-white border border-[#d9e6f5]"></label>
                    <label class="h-[18px] flex items-center gap-[7px] whitespace-nowrap">深度/h ( mm )<input value="1.2" class="flex-1 min-w-0 h-[18px] pl-[2px] bg-white border border-[#d9e6f5]"></label>
                </div>
                <svg class="flex-1 h-full border-l-2 border-[#4d5a68] bg-white" viewBox="684 284 702 452">
                    <defs><pattern id="hatch" width="27" height="27" patternUnits="userSpaceOnUse" patternTransform="rotate(43)"><path d="M4 0v27" stroke="#000" stroke-width="6"/></pattern></defs>
                    <g fill="url(#hatch)" stroke="#000" stroke-width="5"><path d="M762 358h44l122 157v162l-148-3V570l-38-115z"/><path d="M1168 358h99l-50 112 103 75-85 133-188-1V515z"/></g>
                    <g fill="none" stroke="#222" stroke-width="3">
                        <path d="M802 310v48M1171 310v48M802 331h158M1006 331h165M806 358h80M915 358h52M1000 358h50M1085 358h85M928 358v357M1047 358v357M928 515l52 64 67-64M695 358h40M695 517h40M745 517h183M709 362v54M709 465v50M928 713h119M1268 358h104M1230 682h142M1360 362v80M1360 545v30M1360 610v70M870 485q45-60 105-20M1010 455q60-30 98 35M968 570q12-14 22 0"/>
                    </g>
                    <path d="M804 331l26-6v12zM1169 331l-26-6v12zM709 360l-7 30h14zM709 516l-7-30h14zM930 713l24-6v12zM1045 713l-24-6v12zM1360 360l-6 28h12zM1360 681l-6-28h12zM930 446l28-2-1 12zM1040 444l-27 3 3 11zM866 497l8-24 8 5zM1110 492l-16-22 9-4z" fill="#000"/>
                    <g class="mono" font-size="32" fill="#222"><text x="973" y="344">D</text><text x="966" y="534">α</text><text x="975" y="705">d</text><text transform="translate(720 449) rotate(-90)">h</text><text x="1320" y="480">板厚</text><text x="1328" y="514">(H)</text></g>
                </svg>
            </div>
            <div class="h-[35px] shrink-0 pl-[108px] pt-[7px] flex items-start gap-[77px] bg-[#d7e6fc] text-[12px] leading-[14px] text-[#15306b]">
                <button class="w-[60px] h-[20px] rounded-sm border-2 border-[#6b85ac] bg-linear-to-b from-[#e3effd] to-[#a9cbf5]">计算</button>
                <button class="w-[60px] h-[20px] rounded-sm border border-[#8bacd8] bg-linear-to-b from-[#dbeafd] to-[#a9cffb]">清空</button>
            </div>
        </section>

        <!-- callout arrows -->
        <svg class="absolute left-0 top-0 w-full h-full pointer-events-none" overflow="visible">
            <g transform="translate(0 -228)" fill="#0f0" stroke="#0f0" stroke-linecap="round"><path d="M1313 791L874 445M1207 781.500L300 761" stroke-width="5"/><path d="M855 430l26 7-9 15zM278 761l26-8v16z" stroke-width="1.500" stroke-linejoin="round"/></g>
        </svg>
    </div>

    <!-- vertical scroll bar -->
    <div class="w-[15px] flex flex-col items-center border-l border-[#7f9fce] bg-linear-to-r from-[#7393bf] to-[#9db8de]">
        <div class="w-[12px] h-[7px] mt-px bg-white border border-[#6d8fbf]"></div>
        <button aria-label="向上滚动" class="h-[15px]"><svg class="w-[9px] h-[5px]" viewBox="0 0 9 5"><path d="M0 5h9L4.500 0z" fill="#3b5680"/></svg></button>
        <div class="w-[14px] h-[706px] flex items-center justify-center rounded-sm border border-[#54739f] bg-linear-to-r from-white via-[#e0e6ee] to-[#b4c0d0]"><div class="w-[7px] h-[8px] bg-[repeating-linear-gradient(#7d8da5_0_1px,transparent_1px_2px)]"></div></div>
        <button aria-label="向下滚动" class="mt-auto mb-[5px]"><svg class="w-[9px] h-[5px]" viewBox="0 0 9 5"><path d="M0 0h9L4.500 5z" fill="#3b5680"/></svg></button>
    </div>
</main>

<!-- sheet tabs -->
<nav class="shrink-0 h-[16px] flex items-stretch border-t border-[#7f9fce] bg-[#9fb9df]">
    <div class="w-[63px] pl-[4px] pr-[5px] flex items-center justify-between bg-[#d0e1f8] border-r border-[#8aa8d4]">
        <button aria-label="第一张"><svg class="w-[8px] h-[8px]" viewBox="0 0 8 8"><path d="M1 0h1.500v8H1zM8 0v8L3.500 4z" fill="#1d3f80"/></svg></button>
        <button aria-label="上一张"><svg class="w-[5px] h-[8px]" viewBox="0 0 5 8"><path d="M5 0v8L0 4z" fill="#1d3f80"/></svg></button>
        <button aria-label="下一张"><svg class="w-[5px] h-[8px]" viewBox="0 0 5 8"><path d="M0 0v8l5-4z" fill="#1d3f80"/></svg></button>
        <button aria-label="最后一张"><svg class="w-[8px] h-[8px]" viewBox="0 0 8 8"><path d="M5.500 0H7v8H5.500zM0 0v8l4.500-4z" fill="#1d3f80"/></svg></button>
    </div>
    <div id="tabs" class="mono flex text-[12px] leading-[15px]"></div>
    <button aria-label="插入工作表" class="w-[38px] pl-[3px] flex items-center bg-[#c9dcf6] [clip-path:polygon(0_0,100%_0,calc(100%_-_13px)_100%,0_100%)]"><svg class="w-[15px] h-[13px]" viewBox="0 0 15 13"><path d="M4.500 3.500h10v6l-3 3h-7z" fill="#eef2f8" stroke="#6b7690"/><path d="M3.500 0v7M0 3.500h7M1 1l5 5M6 1L1 6" stroke="#e59a26" stroke-width="1.300"/></svg></button>
    <div class="ml-auto w-[7px] my-px flex justify-center bg-white border border-[#6d8fbf]"><span class="border-l border-[#6d8fbf]"></span></div>
    <div class="w-[748px] flex items-center bg-[#7d9cc8]">
        <button aria-label="向左滚动" class="w-[18px] flex justify-center"><svg class="w-[5px] h-[9px]" viewBox="0 0 5 9"><path d="M5 0v9L0 4.500z" fill="#3b5680"/></svg></button>
        <div class="flex-1 h-[14px] flex items-center justify-center rounded-sm border border-[#54739f] bg-linear-to-b from-white via-[#dfe5ed] to-[#b4c0d0]"><div class="w-[8px] h-[7px] bg-[repeating-linear-gradient(90deg,#7d8da5_0_1px,transparent_1px_2px)]"></div></div>
        <button aria-label="向右滚动" class="w-[58px] pl-[46px]"><svg class="w-[5px] h-[9px]" viewBox="0 0 5 9"><path d="M0 0v9l5-4.500z" fill="#3b5680"/></svg></button>
    </div>
    <div class="w-[7px] my-px flex justify-center bg-white border border-[#6d8fbf]"><span class="border-l border-[#6d8fbf]"></span></div>
    <div class="w-[16px] bg-[#7f9fd4]"></div>
</nav>

<!-- status bar -->
<footer class="shrink-0 h-[22px] flex items-center border-t border-[#567db1] bg-[linear-gradient(#dfebfc_0%,#cfe0f9_30%,#b4cff5_33%,#d8e6fa_100%)]">
    <span class="pl-[7px] w-[40px] text-black/80">就绪</span>
    <span class="h-full border-l border-[#8fb0de]"></span>
    <div class="ml-auto h-full pl-[5px] flex items-center border-l-2 border-[#87a9d9] bg-linear-to-b from-[#bcd4f6] to-[#8fb3e6]">
        <div class="h-[18px] flex rounded-sm border border-[#7c9cc9] overflow-hidden">
            <button aria-label="普通" class="w-[18px] flex items-center justify-center bg-linear-to-b from-[#ffe2a0] to-[#fbc35a]"><svg class="w-[14px] h-[12px]" viewBox="0 0 14 12"><path d="M.5.500h13v11H.5z" fill="#fff" stroke="#555"/><path d="M5 0v12M9 0v12M0 4h14M0 8h14" stroke="#555"/></svg></button>
            <button aria-label="页面布局" class="w-[18px] flex items-center justify-center bg-[#d9e6f8]"><svg class="w-[12px] h-[12px]" viewBox="0 0 12 12"><path d="M1 1h10v10H1z" fill="#ddd" stroke="#555" stroke-width="2"/><path d="M3.500 2.500h5v7h-5z" fill="#fff" stroke="#555"/><path d="M5 5h2M5 7h2" stroke="#555"/></svg></button>
            <button aria-label="分页预览" class="w-[18px] flex items-center justify-center bg-[#d9e6f8]"><svg class="w-[13px] h-[12px]" viewBox="0 0 13 12"><path d="M1 1h11v10H1z" fill="#999" stroke="#555"/><path d="M1.500 1h4v6h-4zM7 1h4v6H7z" fill="#fff" stroke="#555"/></svg></button>
        </div>
        <button class="ml-[8px] w-[26px]">70%</button>
        <button aria-label="缩小" class="ml-[16px]"><svg class="w-[17px] h-[17px]" viewBox="0 0 17 17"><circle cx="8.500" cy="8.500" r="7.500" fill="#e3ebf5" stroke="#5c6f8e" stroke-width="1.500"/><path d="M4.500 8.500h8" stroke="#44546e" stroke-width="2.500"/></svg></button>
        <div class="relative w-[101px] h-[17px] flex items-center">
            <input aria-label="显示比例" type="range" min="10" max="200" value="70" class="absolute inset-0 w-full opacity-0">
            <svg class="w-full h-[17px] pointer-events-none" viewBox="0 0 101 17"><path d="M0 9h101" stroke="#5678ac"/><path d="M0 10h101M52 5v8" stroke="#dce9fb"/><path d="M31.500 2.500h8v7l-4 4-4-4z" fill="#e6eefa" stroke="#54688a"/><path d="M35.500 4v6" stroke="#54688a"/></svg>
        </div>
        <button aria-label="放大" class="mr-[4px]"><svg class="w-[17px] h-[17px]" viewBox="0 0 17 17"><circle cx="8.500" cy="8.500" r="7.500" fill="#e3ebf5" stroke="#5c6f8e" stroke-width="1.500"/><path d="M4.500 8.500h8M8.500 4.500v8" stroke="#44546e" stroke-width="2.500"/></svg></button>
    </div>
</footer>

<!-- taskbar -->
<footer class="shrink-0 h-[40px] flex items-center border-t border-[#0b1830] bg-[linear-gradient(90deg,#07305e_0%,#1a3c68_35%,#183a68_45%,#052a5a_52%,#193c68_60%,#052857_66%,#062a5a_85%,#112a4c_92%)] text-white">
    <button aria-label="开始菜单" class="ml-[8px] w-[38px]">
        <svg class="w-[38px] h-[38px]" viewBox="0 0 38 38"><defs><radialGradient id="st" cy=".9"><stop stop-color="#45d1f2"/><stop offset=".6" stop-color="#1b5f98"/><stop offset="1" stop-color="#4d7396"/></radialGradient></defs><circle cx="19" cy="19" r="17.500" fill="url(#st)" stroke="#8fb0c6"/><path d="M3 17Q5 3 19 3t16 14q-16 5-32 0z" fill="#fff" opacity=".25"/><path d="M11 11q4-2.500 7-.5l-1 8q-4-1-7.500.5z" fill="#ee6a2c"/><path d="M20 11q4 1.500 8-.5l-1.500 8q-4 2-7.500 0z" fill="#8cc63f"/><path d="M9 21q4-2 7.500 0l-1 8q-4-2-8 0z" fill="#45a4e6"/><path d="M18.500 21q4 2 7.500 0l-1 7.500q-4 2-7.500.5z" fill="#fccb36"/></svg>
    </button>
    <div class="ml-[14px] flex gap-[4px] h-[38px]">
        <button aria-label="shell" class="w-[58px] flex items-center justify-center rounded-sm border border-[#8fa3bd] bg-linear-to-br from-[#8193aa] via-[#34537d] to-[#284771]">
            <svg class="w-[32px] h-[30px]" viewBox="0 0 32 30"><path d="M11 28Q0 20 1 12 4 3 15 2q12 0 16 9 1 9-10 17-5 2-10 0z" fill="#f9d98e" stroke="#c98f3c"/><path d="M13 27L3 11M14 27L8 5M16 27V2M18 27l6-22M19 27l11-16" stroke="#dca654"/><path d="M20 11l2.500 6H29l-5 4 2 7-6-4-6 4 2-7-5-4h6.500z" fill="#ef8a2c" stroke="#b0601c"/></svg>
        </button>
        <button aria-label="文本" class="w-[58px] flex items-center justify-center rounded-sm border border-[#8fa3bd] bg-linear-to-br from-[#8193aa] via-[#34537d] to-[#284771]">
            <svg class="w-[26px] h-[28px]" viewBox="0 0 26 28"><path d="M1 1h24v26H1z" fill="#eef8ff" stroke="#cde"/><path d="M4 4h18M4 8h18M4 12h18M4 16h18M4 20h18M4 24h18" stroke="#2e8ec4" stroke-width="1.800"/></svg>
        </button>
        <button aria-label="Genesis" class="w-[58px] flex items-center justify-center rounded-sm border border-[#8fa3bd] bg-linear-to-br from-[#8193aa] via-[#34537d] to-[#284771]">
            <svg class="w-[30px] h-[30px]" viewBox="0 0 30 30"><path d="M28 1l-3 7h-9q-4 0-5 5l-1 6q0 4 4 4h3q2 0 3-4h-5l3-5h9l-2 8q-1 7-7 7H9q-8 0-7-8l2-8Q6 4 14 4h7q4 0 7-3z" fill="#e02f20" stroke="#8e1a10"/></svg>
        </button>
        <button aria-label="软盘" class="w-[58px] flex items-center justify-center rounded-sm border border-[#8fa3bd] bg-linear-to-br from-[#8193aa] via-[#34537d] to-[#284771]">
            <svg class="w-[32px] h-[32px]" viewBox="0 0 32 32"><path d="M1 0h30v32H1z" fill="#1d35c4"/><path d="M8 0h16v11H8z" fill="#d5d8de"/><path d="M17 2h4v7h-4z" fill="#1d35c4"/><path d="M4 14h24v16H4z" fill="#fff"/><path d="M5 18h22M5 22h22M5 26h11" stroke="#a33" stroke-width="1.300"/><path d="M1 30h30v2H1z" fill="#c22"/><text x="17" y="29" font-size="7" fill="#222">64.</text></svg>
        </button>
        <button aria-label="P" class="w-[58px] flex items-center justify-center rounded-sm border border-[#8fa3bd] bg-linear-to-br from-[#8193aa] via-[#34537d] to-[#284771]">
            <svg class="w-[32px] h-[32px]" viewBox="0 0 32 32"><path d="M5 13V1h15" fill="none" stroke="#17a04d"/><path d="M13 6h8q10 1 9 10t-11 8h-3l-1 5q-1 2-6 2l4-13h4V6z" fill="#169a49"/><path d="M10 9h7M9 12h7M10 15h8M9 18h8" stroke="#169a49" stroke-width="2"/></svg>
        </button>
        <div class="flex w-[58px]">
            <button aria-label="Excel" class="w-[54px] flex items-center justify-center rounded-sm border border-[#d5dfeb] bg-linear-to-br from-[#d4dde8] to-[#7d92b0]">
                <svg class="w-[32px] h-[30px]" viewBox="0 0 32 30"><path d="M2 29V9Q3 1 12 1h17v28z" fill="#eef7ea" stroke="#3f8f3a" stroke-width="2"/><path d="M14 12h16v16H14z" fill="#fff" stroke="#62a857"/><path d="M16 19h4v3h-4zM22 14h6v3h-6zM22 19h6v3h-6zM16 24h4v3h-4zM22 24h6v3h-6z" fill="#5ca350"/><path d="M7 7l10 12M17 7L7 19" stroke="#1d6b2c" stroke-width="3.500"/></svg>
            </button>
            <span class="w-[4px] my-px rounded-r border border-l-0 border-[#b3c1d3] bg-[#6a7f9c]"></span>
        </div>
        <button aria-label="记事本" class="w-[58px] flex items-center justify-center rounded-sm border border-[#8fa3bd] bg-linear-to-br from-[#8193aa] via-[#34537d] to-[#284771]">
            <svg class="w-[32px] h-[32px]" viewBox="0 0 32 32"><path d="M12 3l16 1-5 23-19-3z" fill="#8ccad6" stroke="#5d7f8a"/><path d="M12 3l9 1-8 21-9-1z" fill="#c3e6ec"/><path d="M23 28l5-24 3 20z" fill="#e8e8e8"/><path d="M12 1v4M15 1v4M18 2v4M21 2v4M24 2v4M27 2v4" stroke="#dfe5ea"/></svg>
        </button>
        <button aria-label="CAM" class="w-[58px] flex items-center justify-center rounded-sm border border-[#8fa3bd] bg-linear-to-br from-[#8193aa] via-[#34537d] to-[#284771]">
            <svg class="w-[32px] h-[28px]" viewBox="0 0 32 28"><ellipse cx="19" cy="18" rx="11" ry="8" fill="#1a9aa0" stroke="#095057"/><ellipse cx="20" cy="15" rx="7" ry="5" fill="#7fe0d8" stroke="#0b5f66"/><circle cx="21" cy="15" r="3" fill="#e8d44a" stroke="#a06a20"/><path d="M1 6l8-5 4 5-6 3z" fill="#19b0b0" stroke="#054"/><path d="M3 19q8 9 20 7M7 14q-4 3 0 6" fill="none" stroke="#cbd8e0" stroke-width="2"/><path d="M27 6v5M24 8h6" stroke="#9a1fa0"/></svg>
        </button>
        <div class="flex w-[58px]">
            <button aria-label="X" class="w-[50px] flex items-center justify-center rounded-sm border border-[#8fa3bd] bg-linear-to-br from-[#8193aa] via-[#34537d] to-[#284771]">
                <svg class="w-[32px] h-[30px]" viewBox="0 0 32 30"><path d="M2 1h6l22 28h-7z" fill="#8a1a8c" stroke="#f2dff2"/><path d="M28 1L18 13M14 17L3 29" stroke="#fff" stroke-width="3.500"/><path d="M28 1L18 13M14 17L3 29" stroke="#222" stroke-width="2"/></svg>
            </button>
            <span class="w-[4px] my-px rounded-r border border-l-0 border-[#6d83a2] bg-[#2a4468]"></span>
            <span class="w-[4px] my-[2px] rounded-r border border-l-0 border-[#4d6688] bg-[#1a3560]"></span>
        </div>
        <button aria-label="钉钉" class="w-[58px] flex items-center justify-center rounded-sm border border-[#8fa3bd] bg-linear-to-br from-[#8193aa] via-[#34537d] to-[#284771]">
            <svg class="w-[28px] h-[28px]" viewBox="0 0 28 28"><rect width="28" height="28" rx="6" fill="#1186f5"/><path d="M7 5q9 3 13 6 2 2 0 4l-4 9 1-5h-3q-4-3-4-6l3 1q-5-4-6-9z" fill="#fff"/></svg>
        </button>
    </div>
    <div class="ml-auto flex items-center gap-[9px]">
        <button aria-label="键盘"><svg class="w-[16px] h-[14px]" viewBox="0 0 16 14"><path d="M.5 5.500h15v8H.5z" fill="#ccc" stroke="#eee"/><path d="M2 8h12M2 10h12M4 12h8" stroke="#555" stroke-dasharray="1 1"/><path d="M3 5q2-4 5-2t6-2" fill="none" stroke="#aaa"/></svg></button>
        <button aria-label="输入法帮助"><svg class="w-[15px] h-[15px]" viewBox="0 0 15 15"><circle cx="7.500" cy="7.500" r="6.800" fill="#1c35c8" stroke="#cdd6ee"/><path d="M5.500 6q0-2.500 2-2.500t2 2q0 1-1 1.500t-1 2M7.500 10v2" fill="none" stroke="#fff" stroke-width="1.800"/></svg></button>
        <button aria-label="语言栏选项" class="w-[8px]"><svg class="w-[8px] h-[18px]" viewBox="0 0 8 18"><path d="M2.500 3V.5h5v3H6M.5 2.500h5v3h-5z" fill="none" stroke="#fff"/><path d="M1 14h6l-3 3z" fill="#fff"/></svg></button>
        <button aria-label="显示隐藏的图标" class="ml-[2px]"><svg class="w-[8px] h-[5px]" viewBox="0 0 8 5"><path d="M0 5h8L4 0z" fill="#fff"/></svg></button>
        <button aria-label="操作中心" class="ml-[4px]"><svg class="w-[15px] h-[16px]" viewBox="0 0 15 16"><path d="M1 1v14" stroke="#fff" stroke-width="1.500"/><path d="M3 2q4-2 10 0v7H3z" fill="#fff"/><circle cx="10.500" cy="11" r="4.500" fill="#d42a20"/><path d="M8.500 9l4 4M12.500 9l-4 4" stroke="#fff" stroke-width="1.500"/></svg></button>
        <button aria-label="音量"><svg class="w-[15px] h-[14px]" viewBox="0 0 15 14"><path d="M0 4h3l4-4v14l-4-4H0z" fill="#fff"/><path d="M9 5q1.500 2 0 4M11 3q3 4 0 8M13 1.500q3.500 5.500 0 11" fill="none" stroke="#fff"/></svg></button>
        <button aria-label="网络"><svg class="w-[16px] h-[15px]" viewBox="0 0 16 15"><path d="M4.500 4.500h10v7h-10z" fill="#22466f" stroke="#fff" stroke-width="1.400"/><path d="M6 14h8M10 12v2M2.500 7v7h3M1 0v3M4 0v3M0 3h5v3H0z" fill="none" stroke="#fff"/></svg></button>
        <time class="ml-[4px] mr-[-3px] w-[62px] text-center leading-[18px] whitespace-nowrap">21:57<br>2023/8/12</time>
        <button aria-label="显示桌面" class="w-[13px] h-[38px] mr-px border border-[#7a8ca6] bg-linear-to-br from-[#5b6c86] to-[#14263f]"></button>
    </div>
</footer>

<script>
    const cols = [...'ABCDEFGHIJKLMNOPQRSTUVWXYZ', ...[...'ABCDEFGHIJKL'].map(c => 'A' + c)];
    const headCls = 'border-r border-b border-[#9eb6ce] bg-linear-to-b from-[#f8fafc] to-[#d6dde8] font-normal';
    const headSel = 'border-r border-b border-[#f29536] bg-linear-to-b from-[#f9d99f] to-[#f1c15f] font-normal';
    document.getElementById('cols').innerHTML =
        '<th class="w-[26px] border-r border-b border-[#9eb6ce] bg-[#a9c4e9] p-0"><svg class="ml-[14px] w-[8px] h-[8px]" viewBox="0 0 8 8"><path d="M8 0v8H0z" fill="#dfeaf8"/></svg></th>' +
        cols.map((c, i) => `<th class="${i ? headCls : headSel}">${c}</th>`).join('');

    const rowCls = 'border-r border-b border-[#9eb6ce] bg-[#e4ecf7] font-normal p-0';
    const rowSel = 'border-r border-b border-[#f29536] bg-[#ffd58d] font-normal p-0';
    const cells = cols.map(() => '<td class="border-r border-b border-[#d0d7e5] p-0"></td>').join('');
    let html = '';
    for (let r = 1; r <= 59; r++) {
        html += `<tr class="h-[13px]"><th class="${r > 1 ? rowCls : rowSel}">${r}</th>${cells}</tr>`;
    }
    document.getElementById('rows').innerHTML = html;

    const slash = '<svg class="w-[12px] h-[15px] shrink-0" viewBox="0 0 12 15"><path d="M2 15L12 0" stroke="#fff" stroke-width="1.500"/><path d="M1 15L11 0" stroke="#8fabd6"/><path d="M0 11v4h3z" fill="#7f9fce"/></svg>';
    const names = ['指示', ...Array.from({length: 10}, (_, i) => `图${i + 1}(fig${i + 1})`)];
    document.getElementById('tabs').innerHTML = names.map((n, i) =>
        `<button class="flex items-center ${i === 2 ? 'bg-white' : 'bg-[#c9dcf6]'} ${i === 0 ? 'pl-[9px] text-[13px]' : 'pl-[5px]'}">${n}${slash}</button>`).join('');

    // layer list: name, fill, y
    const layers = [
        ['to', '#fff', 264.5], ['ts', '#0b9a7c', 272], ['cs', '#f8c24a', 279.5], ['ss', '#f8c24a', 287], ['bs', '#0b9a7c', 294.5], ['bo', '#fff', 302],
        ['drl', '#9cb0b8', 312], ['rout', '#d8d8d8', 319.5]
    ];
    ['bp', 'gd1', 'gg1', 'gko', 'gm1', 'gm17', 'gm19', 'gm3', 'gm4', 'pb', 'pt', 'tp'].forEach((n, i) => layers.push([n, '#9fdcda', 329.5 + i * 7.5]));
    document.getElementById('layers').innerHTML = layers.map(([n, c, y]) =>
        `<path d="M29 ${y - .5}h56v8H29z" fill="#000"/><path d="M45 ${y + .5}h39v6H45z" fill="${c}"/>` +
        `<path d="M30.500 ${y + 1}h5v5h-5z" fill="${n === 'gm1' ? '#fff' : '#000'}" stroke="${n === 'gm1' ? '#10107a' : '#ddd'}"/>` +
        (n === 'gm1' ? `<path d="M38 ${y}h6v6h-6z" fill="#4cb82a"/><path d="M39 ${y + 1}h3l-1 1 2 3-1 1-2-3-1 1z" fill="#fff"/><path d="M81 ${y + 3}h2v1h-2z"/>` : '') +
        `<text x="46" y="${y + 5.5}">${n}</text>`).join('');
</script>
</body>
</html>
